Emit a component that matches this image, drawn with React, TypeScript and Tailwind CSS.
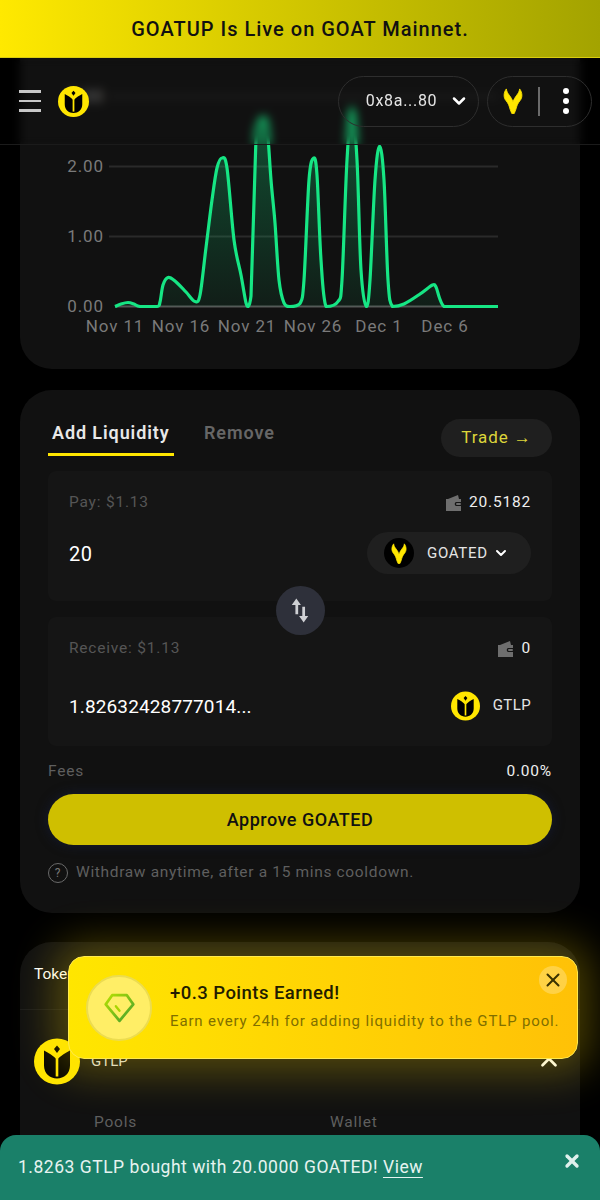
import { ChevronDown, ChevronUp, X } from "lucide-react";

const linePoints: [number, number][] = [
  [115, 306.5], [121, 304], [128, 302.5], [134, 304], [140, 306.5], [157, 306.5], [160, 302], [163, 285],
  [168, 277.5], [175, 281], [186, 292], [195, 301.5], [200, 295], [205.7, 250], [212, 200], [217, 168],
  [222, 158], [227, 168], [234, 240], [241, 275], [246, 303], [248, 306.5], [251, 296], [255.7, 147], [259, 124],
  [263, 118], [267, 126], [271, 180], [275, 223], [279, 280], [284, 303], [290, 306.5], [300, 303.5],
  [304, 280], [309, 180], [313.6, 158], [317, 175], [321, 260], [326, 306.5], [338, 301.5], [342, 280],
  [347, 160], [352, 108], [357, 160], [361, 270], [366.4, 306.5], [370, 280], [375, 180], [379.6, 146],
  [384, 180], [388, 280], [392.5, 306.5], [404, 304], [420, 294], [432.5, 285], [436, 287], [439.5, 298],
  [444, 306.5], [452, 306.5], [498, 306.5],
];

function smoothPath(pts: [number, number][]) {
  let d = `M${pts[0][0]} ${pts[0][1]}`;
  for (let i = 0; i < pts.length - 1; i++) {
    const p0 = pts[Math.max(i - 1, 0)];
    const p1 = pts[i];
    const p2 = pts[i + 1];
    const p3 = pts[Math.min(i + 2, pts.length - 1)];
    const c1x = p1[0] + (p2[0] - p0[0]) / 6;
    const c1y = Math.min(306.5, p1[1] + (p2[1] - p0[1]) / 6);
    const c2x = p2[0] - (p3[0] - p1[0]) / 6;
    const c2y = Math.min(306.5, p2[1] - (p3[1] - p1[1]) / 6);
    d += ` C${c1x.toFixed(1)} ${c1y.toFixed(1)} ${c2x.toFixed(1)} ${c2y.toFixed(1)} ${p2[0]} ${p2[1]}`;
  }
  return d;
}

function TulipLogo({ className }: { className: string }) {
  return (
    <svg viewBox="0 0 46 46" className={className}>
      <ellipse cx="23" cy="23" rx="23" ry="23" fill="#ffe600" />
      <path d="M10 12 C14 14 19 17 23 21 C27 17 32 14 36 12 V27 C36 35 30 40 23 40 C16 40 10 35 10 27 Z" fill="#000" />
      <rect x="21.7" y="16" width="2.6" height="22" fill="#ffe600" />
      <path d="M23 7 L26 10.5 L23 14.5 L20 10.5 Z" fill="#000" />
    </svg>
  );
}

function HornMark({ className }: { className: string }) {
  return (
    <svg viewBox="0 0 24 30" className={className}>
      <path
        d="M4 0.5 C0.5 5 0.5 11 3.5 14.5 C6.5 18 7.5 21 8.5 25 L10.5 30 L13.5 30 L15.5 25 C16.5 21 17.5 18 20.5 14.5 C23.5 11 23.5 5 20 0.5 C19.5 4 18 6 16.5 8 C14.5 10.5 13 13 12 16 C11 13 9.5 10.5 7.5 8 C6 6 4.5 4 4 0.5 Z"
        fill="#ffe600"
        stroke="#ffe600"
        strokeWidth="1"
        strokeLinejoin="round"
      />
    </svg>
  );
}

function WalletIcon() {
  return (
    <svg viewBox="0 0 18 18" className="h-[18px] w-[18px]">
      <path d="M3 5 L13 1 L14 5 Z" fill="#6e6e6e" />
      <path d="M1 5 H16 V8 H11 A2.2 2.2 0 0 0 11 12 H16 V17 H1 Z" fill="#6e6e6e" />
      <rect x="11" y="9" width="5" height="2" rx="1" fill="#6e6e6e" />
    </svg>
  );
}

function App() {
  const line = smoothPath(linePoints);
  return (
    <div className="relative h-[1200px] w-[600px] overflow-hidden bg-black font-['Roboto',sans-serif]">
      {/* top banner */}
      <div className="relative z-20 flex h-[58px] items-center justify-center border-b border-[#d8cc10] bg-gradient-to-r from-[#ffe900] to-[#a3a300]">
        <span className="text-[20px] font-medium tracking-[1px] text-[#111]">GOATUP Is Live on GOAT Mainnet.</span>
      </div>

      <header className="relative z-10 flex h-[87px] items-center border-b border-[#1b1b1b] pl-[19px] pr-[8px] backdrop-blur-[5px]">
        <div className="flex w-[22px] flex-col gap-[7px]">
          <span className="h-[2.5px] bg-[#c8c8c8]" />
          <span className="h-[2.5px] bg-[#c8c8c8]" />
          <span className="h-[2.5px] bg-[#c8c8c8]" />
        </div>
        <TulipLogo className="ml-[17px] h-[31px] w-[31px]" />
        <div className="ml-auto flex h-[51px] w-[141px] items-center justify-center gap-[12px] rounded-full border border-[#2e2e2e] pl-[18px] text-[16px] tracking-[0.7px] text-[#e5e5e5]">
          <span>0x8a...80</span>
          <ChevronDown className="h-[20px] w-[20px] text-white" strokeWidth={3} />
        </div>
        <div className="ml-[8px] flex h-[51px] w-[105px] items-center rounded-full border border-[#2e2e2e] pl-[15px]">
          <HornMark className="h-[26px] w-[20px]" />
          <span className="ml-[15px] h-[29px] w-[2px] bg-[#6b6b6b]" />
          <div className="ml-[23px] flex flex-col gap-[4px]">
            <span className="h-[6px] w-[6px] rounded-full bg-white" />
            <span className="h-[6px] w-[6px] rounded-full bg-white" />
            <span className="h-[6px] w-[6px] rounded-full bg-white" />
          </div>
        </div>
      </header>

      <main className="-mt-[120px] flex flex-col px-[20px]">
        {/* chart card */}
        <section className="h-[344px] overflow-hidden rounded-b-[32px] bg-[#111]">
          <svg viewBox="20 25 560 344" className="block h-[344px] w-[560px]">
            <defs>
              <linearGradient id="area" x1="0" y1="0" x2="0" y2="1">
                <stop offset="0" stopColor="#12e582" stopOpacity="0.3" />
                <stop offset="1" stopColor="#12e582" stopOpacity="0.06" />
              </linearGradient>
            </defs>
            {[96.5, 166.5, 236.5].map((y) => (
              <line key={y} x1="109" x2="498" y1={y} y2={y} stroke="#2a2a2a" strokeWidth="2" />
            ))}
            <line x1="115" x2="498" y1="306.5" y2="306.5" stroke="#555" strokeWidth="2" />
            <g fill="#7a7a7a" fontFamily="Roboto, sans-serif" fontSize="17" letterSpacing="0.9" textAnchor="end">
              <text x="104" y="172">2.00</text>
              <text x="104" y="242">1.00</text>
              <text x="104" y="312">0.00</text>
              <text x="104" y="102">3.00</text>
            </g>
            <g fill="#7a7a7a" fontFamily="Roboto, sans-serif" fontSize="17" letterSpacing="0.9" textAnchor="middle">
              <text x="115" y="332">Nov 11</text>
              <text x="181" y="332">Nov 16</text>
              <text x="247" y="332">Nov 21</text>
              <text x="313" y="332">Nov 26</text>
              <text x="379" y="332">Dec 1</text>
              <text x="445" y="332">Dec 6</text>
            </g>
            <path d={`${line} L498 306.5 L115 306.5 Z`} fill="url(#area)" />
            <path d={line} fill="none" stroke="#16e684" strokeWidth="3.2" strokeLinejoin="round" />
          </svg>
        </section>

        {/* liquidity card */}
        <section className="mt-[21px] h-[523px] rounded-[32px] bg-[#111] px-[28px] pt-[29px]">
          <div className="flex items-start justify-between">
            <div className="flex">
              <div className="h-[37px] w-[126px] border-b-[3px] border-[#ffe600] pl-[4px] text-[18px] font-semibold tracking-[0.9px] text-[#e8e8e8]">
                Add Liquidity
              </div>
              <div className="ml-[30px] text-[18px] font-semibold tracking-[0.9px] text-[#666]">Remove</div>
            </div>
            <div className="flex h-[38px] w-[111px] items-center justify-center rounded-full bg-[#1f1f1f] text-[17px] tracking-[0.9px] text-[#dcd53a]">
              Trade →
            </div>
          </div>

          <div className="mt-[14px] h-[130px] rounded-[8px] bg-[#151515] pl-[21px] pr-[21px] pt-[20px]">
            <div className="flex items-center justify-between text-[15.5px] tracking-[0.8px]">
              <span className="text-[#555]">Pay: $1.13</span>
              <span className="flex items-center gap-[6px] text-[#eee]"><WalletIcon />20.5182</span>
            </div>
            <div className="mt-[18px] flex items-center justify-between">
              <span className="pt-[2px] text-[20px] tracking-[0.5px] text-white">20</span>
              <div className="flex h-[42px] w-[164px] items-center rounded-full bg-[#1f1f1f] pl-[17px] text-[15px] tracking-[0.7px] text-[#e5e5e5]">
                <span className="flex h-[30px] w-[30px] items-center justify-center rounded-full bg-black">
                  <HornMark className="h-[21px] w-[16px]" />
                </span>
                <span className="ml-[13px]">GOATED</span>
                <ChevronDown className="ml-[5px] h-[16px] w-[16px] text-white" strokeWidth={3} />
              </div>
            </div>
          </div>

          <div className="relative z-[1] mx-auto -mb-[18px] -mt-[15px] flex h-[49px] w-[49px] items-center justify-center rounded-full bg-[#2e303a]">
            <svg viewBox="0 0 24 28" className="h-[27px] w-[22px]" fill="#cfd0d4">
              <path d="M8 1 L13 8 H10 V18 H7 V8 H3 Z" />
              <path d="M16 27 L11 20 H14.5 V10 H17.5 V20 H21 Z" />
            </svg>
          </div>

          <div className="h-[129px] rounded-[8px] bg-[#151515] pl-[21px] pr-[21px] pt-[20px]">
            <div className="flex items-center justify-between text-[15.5px] tracking-[0.8px]">
              <span className="text-[#555]">Receive: $1.13</span>
              <span className="flex items-center gap-[6px] text-[#eee]"><WalletIcon />0</span>
            </div>
            <div className="mt-[29px] flex items-center justify-between">
              <span className="pt-[4px] text-[19px] tracking-[0.13px] text-white">1.82632428777014...</span>
              <div className="flex items-center gap-[13px] text-[15px] tracking-[0.4px] text-[#e5e5e5]">
                <TulipLogo className="h-[30px] w-[29px]" />
                <span>GTLP</span>
              </div>
            </div>
          </div>

          <div className="mt-[14px] flex items-center justify-between text-[15.5px] tracking-[0.8px]">
            <span className="text-[#5f5f5f]">Fees</span>
            <span className="text-[#eee]">0.00%</span>
          </div>
          <div className="mt-[11px] flex h-[51px] items-center justify-center rounded-full bg-[#cfbf00] text-[18px] font-medium tracking-[0.5px] text-[#111] shadow-[0_0_12px_#141a30]">
            Approve GOATED
          </div>
          <div className="mt-[16px] flex items-center gap-[8px] text-[15.5px] tracking-[0.66px] text-[#5f5f5f]">
            <span className="flex h-[20px] w-[20px] items-center justify-center rounded-full border border-[#6a6a6a] text-[12px] text-[#777]">?</span>
            <span>Withdraw anytime, after a 15 mins cooldown.</span>
          </div>
        </section>

        {/* token table card */}
        <section className="mt-[29px] h-[300px] rounded-[32px] bg-[#111]">
          <div className="h-[68px] border-b border-[#1c1c1c] pl-[14px] pt-[21px] text-[15.5px] text-white">Token</div>
          <div className="relative flex items-center pl-[14px] pr-[18px] pt-[28px]">
            <TulipLogo className="h-[47px] w-[46px]" />
            <span className="ml-[11px] text-[15px] text-[#ddd]">GTLP</span>
            <ChevronUp className="ml-auto h-[26px] w-[26px] text-white" strokeWidth={2.5} />
          </div>
          <div className="mt-[26px] flex text-[15.5px] tracking-[0.8px] text-[#5f5f5f]">
            <span className="ml-[74px] w-[236px]">Pools</span>
            <span>Wallet</span>
          </div>
        </section>
      </main>

      {/* points toast */}
      <div className="absolute left-[68px] top-[956px] z-30 flex h-[103px] w-[510px] rounded-[16px] border border-[#ffe94d] bg-gradient-to-r from-[#ffe600] to-[#ffc107] pl-[17px] shadow-[0_0_40px_14px_rgba(255,220,0,0.28)]">
        <div className="mt-[18px] flex h-[66px] w-[66px] items-center justify-center rounded-full border-[2px] border-[#ecdc50] bg-[#ffee66]">
          <svg viewBox="0 0 36 34" className="h-[32px] w-[33px]" fill="none">
            <defs>
              <linearGradient id="gem" x1="0" y1="0" x2="1" y2="1">
                <stop offset="0" stopColor="#b7e000" />
                <stop offset="1" stopColor="#3f9f2f" />
              </linearGradient>
            </defs>
            <path d="M10 3 H26 L33 13 L18 31 L3 13 Z" stroke="url(#gem)" strokeWidth="3" strokeLinejoin="round" />
            <path d="M14 15 L18 20" stroke="#a9d400" strokeWidth="2.5" strokeLinecap="round" />
          </svg>
        </div>
        <div className="ml-[18px] pt-[23px]">
          <div className="text-[18.5px] font-medium leading-[26px] tracking-[0.45px] text-[#221c00]">+0.3 Points Earned!</div>
          <div className="mt-[4px] whitespace-nowrap text-[15px] leading-[22px] tracking-[0.85px] text-[#7f6f00]">
            Earn every 24h for adding liquidity to the GTLP pool.
          </div>
        </div>
        <div className="absolute right-[10px] top-[9px] flex h-[28px] w-[28px] items-center justify-center rounded-full bg-white/25">
          <X className="h-[22px] w-[22px] text-[#3a3200]" strokeWidth={2.2} />
        </div>
      </div>

      {/* tx toast */}
      <div className="absolute bottom-0 left-0 z-40 flex h-[65px] w-[600px] items-center rounded-t-[16px] bg-[#1a8069] pl-[18px] text-[17.5px] tracking-[0.52px] text-[#e6f3f0]">
        <span>
          1.8263 GTLP bought with 20.0000 GOATED! <span className="underline underline-offset-4">View</span>
        </span>
        <X className="absolute right-[18px] top-[16px] h-[20px] w-[20px] text-[#dff0ec]" strokeWidth={4} />
      </div>
    </div>
  );
}

export default App;
